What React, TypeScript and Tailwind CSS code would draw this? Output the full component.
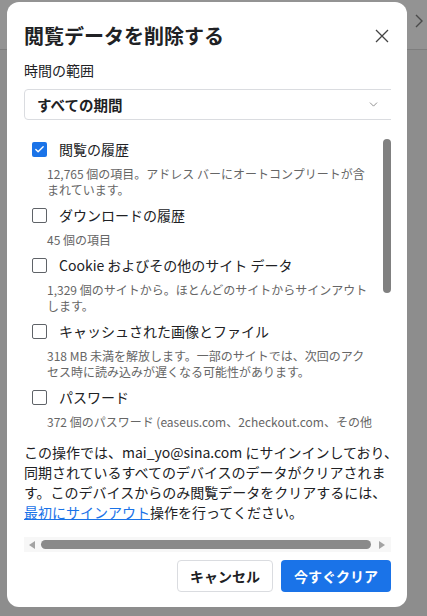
import { Check, ChevronDown } from 'lucide-react';

const FONT = { fontFamily: '"Noto Sans CJK JP", "Noto Sans", sans-serif' };

const ITEMS = [
  {
    label: '閲覧の履歴',
    checked: true,
    desc: ['12,765 個の項目。アドレス バーにオートコンプリートが含', 'まれています。'],
  },
  { label: 'ダウンロードの履歴', checked: false, desc: ['45 個の項目'] },
  {
    label: 'Cookie およびその他のサイト データ',
    checked: false,
    desc: ['1,329 個のサイトから。ほとんどのサイトからサインアウト', 'します。'],
  },
  {
    label: 'キャッシュされた画像とファイル',
    checked: false,
    desc: ['318 MB 未満を解放します。一部のサイトでは、次回のアク', 'セス時に読み込みが遅くなる可能性があります。'],
  },
  {
    label: 'パスワード',
    checked: false,
    desc: ['372 個のパスワード (easeus.com、2checkout.com、その他'],
  },
];

function Checkbox({ checked }: { checked: boolean }) {
  if (checked) {
    return (
      <span className="w-[15px] h-[15px] rounded-[2px] bg-[#1a73e8] flex items-center justify-center shrink-0">
        <Check size={11} strokeWidth={3} className="text-white" />
      </span>
    );
  }
  return <span className="w-[15px] h-[15px] rounded-[2px] border-[1.5px] border-[#5f6368] shrink-0" />;
}

export default function App() {
  return (
    <div className="relative w-[427px] h-[616px] bg-[#8d8d8d] overflow-hidden" style={FONT}>
      {/* page behind the dialog */}
      <div className="h-[50px] bg-[#939393] border-b border-[#7e7e7e] flex justify-end items-start pt-[14px] pr-[4px]">
        <svg width="8" height="14" viewBox="0 0 8 14" fill="none">
          <path d="M1 1l6 6-6 6" stroke="#4a4a4a" strokeWidth="1.4" />
        </svg>
      </div>

      {/* dialog */}
      <div className="absolute left-[7px] top-[2px] w-[400px] h-[605px] bg-white rounded-[12px] pl-[17px] pr-[16px] pt-[22px] flex flex-col">
        <div className="flex items-center justify-between h-6">
          <h1 className="text-[20px] leading-6 font-bold text-[#202124]">閲覧データを削除する</h1>
          <svg width="14" height="14" viewBox="0 0 14 14" fill="none" className="mr-[2px]">
            <path d="M1 1l12 12M13 1L1 13" stroke="#444" strokeWidth="1.3" />
          </svg>
        </div>

        <div className="mt-[12px] text-[14px] leading-5 text-[#202124]">時間の範囲</div>

        {/* select, clipped on the right like the scrolled content */}
        <div className="mt-[9px] w-[367px] overflow-hidden">
          <div className="w-[390px] h-[31px] border border-[#dadce0] rounded-[4px] flex items-center pl-[12px] pr-[33px]">
            <span className="text-[14.5px] font-bold text-[#202124]">すべての期間</span>
            <ChevronDown size={13} strokeWidth={1.5} className="ml-auto text-[#777]" />
          </div>
        </div>

        <div className="mt-[9px] w-[367px] h-[302px] flex overflow-hidden">
          <div className="flex-1 pl-2 pt-[8px] flex flex-col gap-[5px] overflow-hidden">
            {ITEMS.map(item => (
              <div key={item.label} className="flex flex-col">
                <div className="h-6 flex items-center gap-[12px]">
                  <Checkbox checked={item.checked} />
                  <span className="text-[14px] text-[#202124] whitespace-nowrap">{item.label}</span>
                </div>
                <div className="mt-[5px] pl-[15px] text-[12px] leading-4 text-[#666] whitespace-nowrap">
                  {item.desc.map(line => (
                    <div key={line}>{line}</div>
                  ))}
                </div>
              </div>
            ))}
          </div>
          <div className="w-2 shrink-0">
            <div className="mt-[10px] h-[154px] rounded-full bg-[#808080]" />
          </div>
        </div>

        <p className="mt-[11px] text-[14px] leading-5 text-[#202124] whitespace-nowrap">
          この操作では、mai_yo@sina.com にサインインしており、
          <br />
          同期されているすべてのデバイスのデータがクリアされま
          <br />
          す。このデバイスからのみ閲覧データをクリアするには、
          <br />
          <span className="text-[#1a73e8] underline">最初にサインアウト</span>操作を行ってください。
        </p>

        {/* horizontal scrollbar */}
        <div className="mt-[15px] w-[367px] h-[15px] bg-[#f7f7f7] flex items-center">
          <svg width="6" height="8" viewBox="0 0 6 8" className="ml-[5px]">
            <path d="M6 0v8L0 4z" fill="#a3a3a3" />
          </svg>
          <div className="ml-[6px] flex-1 h-[9px] rounded-full bg-[#8a8a8a]" />
          <svg width="6" height="8" viewBox="0 0 6 8" className="ml-[8px] mr-[6px]">
            <path d="M0 0v8l6-4z" fill="#a3a3a3" />
          </svg>
        </div>

        <div className="mt-2 flex justify-end gap-2">
          <button className="w-[96px] h-[32px] rounded-[4px] border border-[#dadce0] bg-white text-[14px] font-bold text-[#202124]">
            キャンセル
          </button>
          <button className="w-[110px] h-[32px] rounded-[4px] bg-[#1a73e8] text-[14px] font-bold text-white">
            今すぐクリア
          </button>
        </div>
      </div>
    </div>
  );
}
